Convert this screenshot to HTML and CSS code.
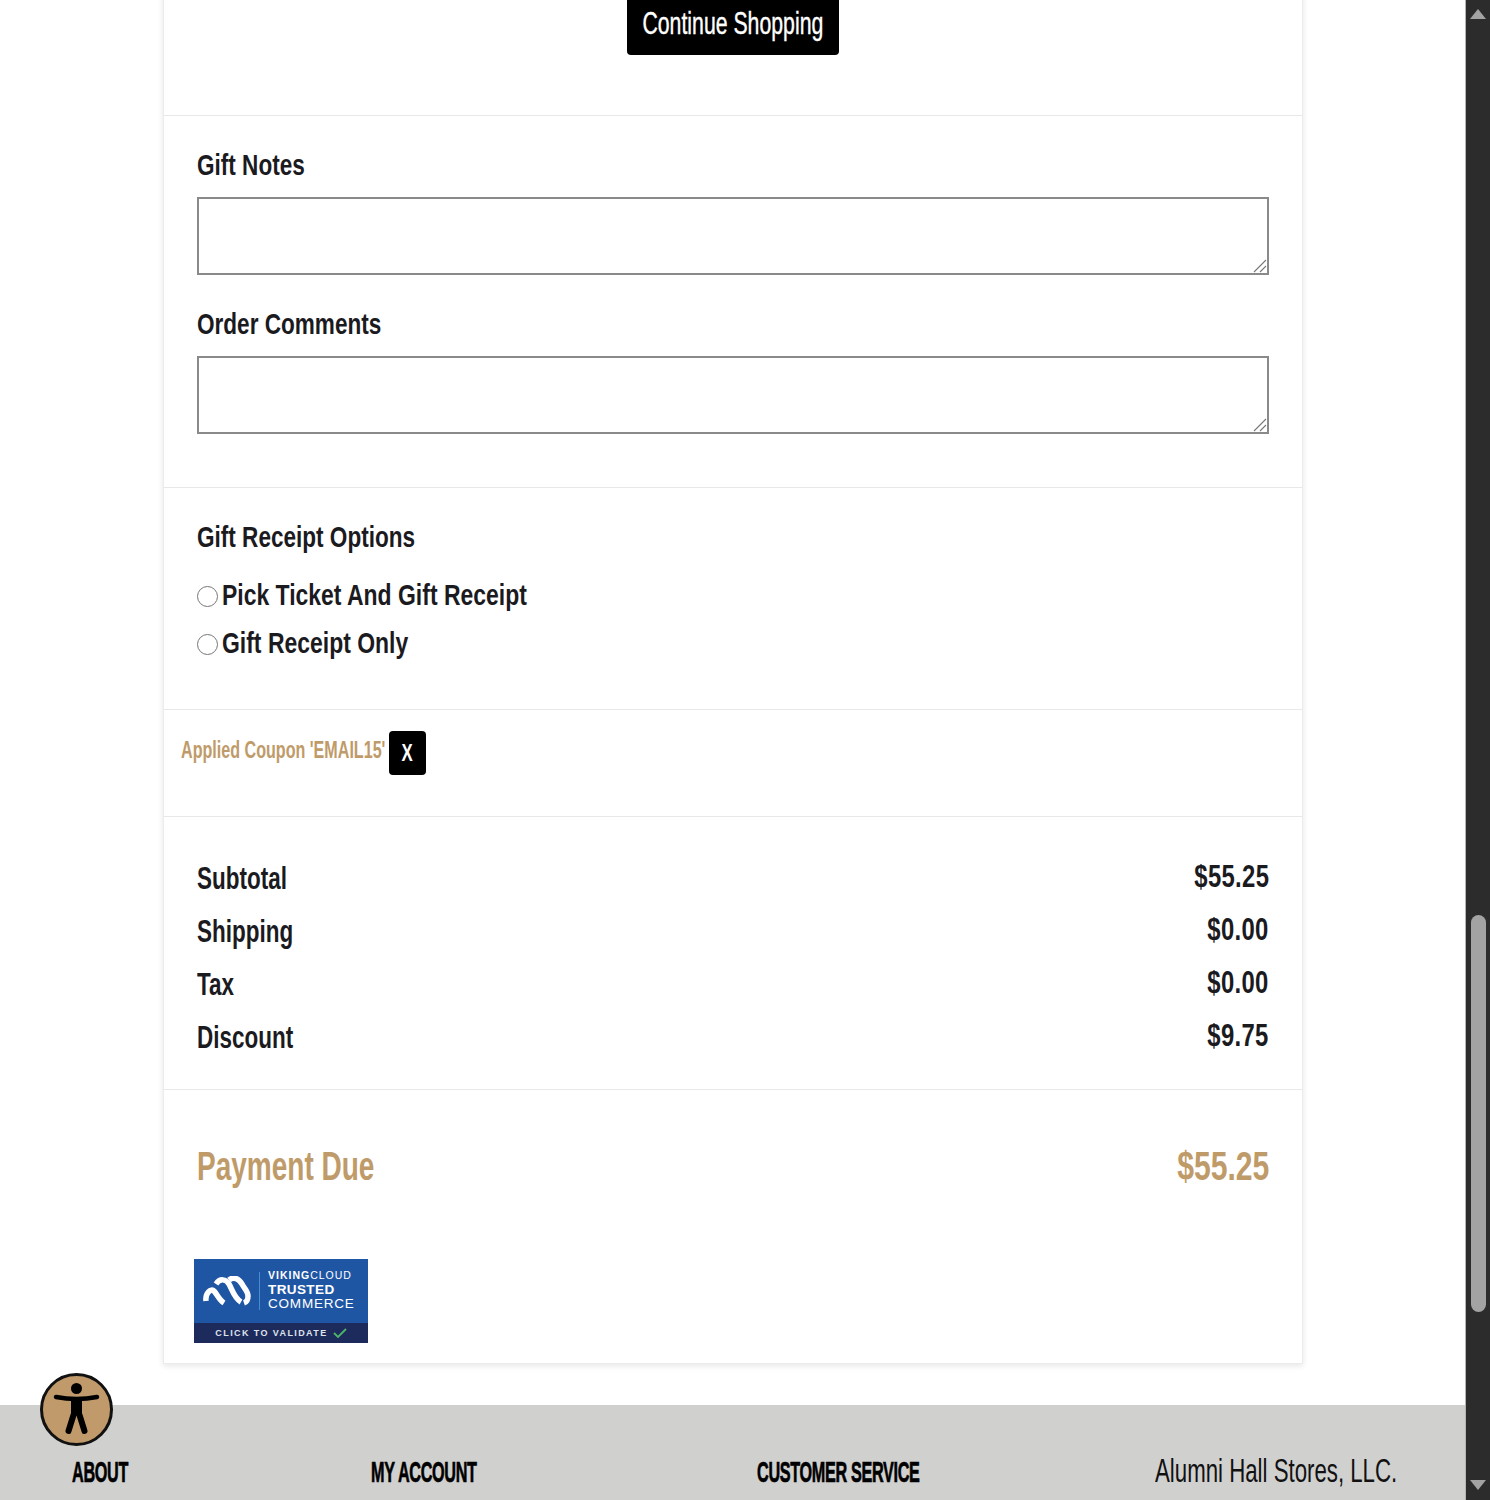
FILE: index.html
```html
<!DOCTYPE html>
<html lang="en">
<head>
  <meta charset="UTF-8">
  <title>Cart - Alumni Hall</title>
  <link rel="stylesheet" href="styles.css">
</head>
<body>
  <div class="page">
    <div class="card">
      <div class="section actions">
        <a class="btn-continue" href="#"><span>Continue Shopping</span></a>
      </div>

      <div class="section notes">
        <label class="field-label">Gift Notes</label>
        <div class="field-wrap">
          <textarea class="field"></textarea>
          <svg class="grip" width="14" height="14" viewBox="0 0 14 14"><path d="M1 13 L13 1 M7 13 L13 7" stroke="#777" stroke-width="1.1" fill="none"/></svg>
        </div>
        <label class="field-label second">Order Comments</label>
        <div class="field-wrap">
          <textarea class="field"></textarea>
          <svg class="grip" width="14" height="14" viewBox="0 0 14 14"><path d="M1 13 L13 1 M7 13 L13 7" stroke="#777" stroke-width="1.1" fill="none"/></svg>
        </div>
      </div>

      <div class="section receipt">
        <div class="field-label">Gift Receipt Options</div>
        <label class="radio-row"><input type="radio" name="receipt"><span>Pick Ticket And Gift Receipt</span></label>
        <label class="radio-row"><input type="radio" name="receipt"><span>Gift Receipt Only</span></label>
      </div>

      <div class="section coupon">
        <span class="coupon-text">Applied Coupon 'EMAIL15'</span>
        <a class="btn-remove" href="#"><span>X</span></a>
      </div>

      <div class="section totals">
        <div class="total-row"><span class="name">Subtotal</span><span class="amount">$55.25</span></div>
        <div class="total-row"><span class="name">Shipping</span><span class="amount">$0.00</span></div>
        <div class="total-row"><span class="name">Tax</span><span class="amount">$0.00</span></div>
        <div class="total-row"><span class="name">Discount</span><span class="amount">$9.75</span></div>
      </div>

      <div class="section due">
        <div class="due-row"><span class="due-name">Payment Due</span><span class="due-amount">$55.25</span></div>
        <div class="badge">
          <div class="badge-top">
            <svg class="badge-logo" width="48" height="30" viewBox="0 0 48 30">
              <path d="M3 25 C2 17 8 12 11 15 C14 18 16 24 21 27" fill="none" stroke="#fff" stroke-width="5.5"/>
              <path d="M13 8 C17 2 23 3 26 8 C29 13 31 22 38 26" fill="none" stroke="#fff" stroke-width="5.5"/>
              <path d="M26 4 C31 0 36 3 39 8 C41 12 45 15 45 20 C45 24 44 26 41 27" fill="none" stroke="#fff" stroke-width="5.5"/>
            </svg>
            <div class="badge-rule"></div>
            <div class="badge-words">
              <div class="badge-brand"><b>VIKING</b>CLOUD</div>
              <div class="badge-trusted">TRUSTED</div>
              <div class="badge-commerce">COMMERCE</div>
            </div>
          </div>
          <div class="badge-bottom">
            <span>CLICK TO VALIDATE</span>
            <svg width="14" height="10" viewBox="0 0 14 10"><path d="M1 5 L5 9 L13 1" fill="none" stroke="#4fb36a" stroke-width="1.8"/></svg>
          </div>
        </div>
      </div>
    </div>

    <div class="footer">
      <div class="footer-head">ABOUT</div>
      <div class="footer-head">MY ACCOUNT</div>
      <div class="footer-head">CUSTOMER SERVICE</div>
      <div class="footer-company">Alumni Hall Stores, LLC.</div>
    </div>

    <a class="a11y" href="#" aria-label="Accessibility">
      <svg width="73" height="73" viewBox="0 0 73 73">
        <circle cx="36.5" cy="36.5" r="35" fill="#c09a6b" stroke="#111" stroke-width="3"/>
        <circle cx="36.5" cy="15.5" r="5.5" fill="#000"/>
        <path d="M16 24 Q36.5 28 57 24" fill="none" stroke="#000" stroke-width="4.5" stroke-linecap="round"/>
        <path d="M36.5 26 V42" stroke="#000" stroke-width="11"/>
        <path d="M33.5 42 L28.5 58 M39.5 42 L44.5 58" fill="none" stroke="#000" stroke-width="6" stroke-linecap="round"/>
      </svg>
    </a>
  </div>

  <div class="scrollbar">
    <div class="arrow up"></div>
    <div class="thumb"></div>
    <div class="arrow down"></div>
  </div>
</body>
</html>
```

FILE: styles.css
```css
html, body {
  height: 100%;
  margin: 0;
  overflow: hidden;
}

body {
  display: flex;
  background: #fff;
  color: #1b1b1f;
  font-family: "Liberation Sans", sans-serif;
  font-weight: 700;
}

.page {
  position: relative;
  flex: 1;
  height: 1500px;
  overflow: hidden;
}

.card {
  width: 1138px;
  margin: -40px 0 41px 163px;
  background: #fff;
  border: 1px solid #ececec;
  border-top: none;
  box-shadow: 0 2px 6px rgba(0,0,0,0.10);
}

.section {
  padding: 0 33px;
  border-bottom: 1px solid #e8e8e8;
}

.section:last-child {
  border-bottom: none;
}

/* continue shopping */
.actions {
  display: flex;
  justify-content: center;
  padding-top: 33px;
  padding-bottom: 60px;
}

.btn-continue {
  display: flex;
  justify-content: center;
  align-items: center;
  width: 212px;
  height: 62px;
  background: #000;
  color: #fff;
  border-radius: 4px;
  text-decoration: none;
  font-size: 31px;
  font-weight: 400;
  -webkit-text-stroke: 0.4px #fff;
}

.btn-continue span {
  flex: none;
  white-space: nowrap;
  transform: scaleX(0.686);
}

/* notes */
.notes {
  padding-top: 34px;
  padding-bottom: 53px;
}

.field-label {
  display: block;
  height: 30px;
  line-height: 30px;
  font-size: 30px;
  white-space: nowrap;
  transform: scaleX(0.752);
  transform-origin: left;
}

.field-label.second {
  margin-top: 34px;
}

.field-wrap {
  position: relative;
  margin-top: 17px;
}

.field {
  display: block;
  width: 100%;
  height: 78px;
  margin: 0;
  padding: 2px;
  box-sizing: border-box;
  border: 2px solid #8a8a8a;
  background: #fff;
  resize: none;
}

.grip {
  position: absolute;
  right: 2px;
  bottom: 2px;
}

/* gift receipt */
.receipt {
  padding-top: 34px;
  padding-bottom: 41px;
}

.receipt .field-label {
  margin-bottom: 20px;
}

.radio-row {
  display: flex;
  align-items: center;
  height: 48px;
  font-size: 30px;
  white-space: nowrap;
}

.radio-row input {
  flex: none;
  width: 21px;
  height: 21px;
  margin: 0 4px 0 0;
}

.radio-row span {
  margin-bottom: 2px;
  transform: scaleX(0.765);
  transform-origin: left;
}

/* coupon */
.coupon {
  display: flex;
  align-items: center;
  padding: 21px 17px 41px;
}

.coupon-text {
  flex: none;
  width: 204px;
  margin: 0 4px 6px 0;
  color: #bf9b6a;
  font-size: 23px;
  white-space: nowrap;
  transform: scaleX(0.7);
  transform-origin: left;
}

.btn-remove {
  display: flex;
  justify-content: center;
  align-items: center;
  width: 37px;
  height: 44px;
  background: #000;
  color: #fff;
  border-radius: 4px;
  text-decoration: none;
  font-size: 24px;
}

.btn-remove span {
  transform: scaleX(0.7);
}

/* totals */
.totals {
  padding-top: 35px;
  padding-bottom: 25px;
}

.total-row {
  display: flex;
  justify-content: space-between;
  height: 53px;
  line-height: 53px;
  font-size: 31px;
  white-space: nowrap;
}

.name {
  transform: scaleX(0.725);
  transform-origin: left;
}

.amount {
  line-height: 49px;
  letter-spacing: 0.4px;
  transform: scaleX(0.77);
  transform-origin: right;
}

.due {
  padding-top: 57px;
  padding-bottom: 20px;
}

.due-row {
  display: flex;
  justify-content: space-between;
  line-height: 38px;
  color: #bf9b6a;
  font-size: 40px;
  white-space: nowrap;
}

.due-name {
  transform: scaleX(0.7);
  transform-origin: left;
}

.due-amount {
  transform: scaleX(0.753);
  transform-origin: right;
}

/* trust badge */
.badge {
  width: 174px;
  height: 84px;
  margin: 74px 0 0 -3px;
  background: #1f56a4;
  color: #fff;
}

.badge-top {
  display: flex;
  align-items: center;
  height: 64px;
  padding-left: 9px;
}

.badge-logo {
  flex: none;
}

.badge-rule {
  width: 1px;
  height: 38px;
  margin: 0 8px;
  background: #3f8fd0;
}

.badge-words {
  margin-bottom: 3px;
}

.badge-brand {
  font-size: 10.5px;
  line-height: 15px;
  font-weight: 400;
  letter-spacing: 1px;
}

.badge-trusted,
.badge-commerce {
  font-size: 13.5px;
  line-height: 14px;
  letter-spacing: 0.4px;
}

.badge-commerce {
  font-weight: 400;
  letter-spacing: 0.8px;
}

.badge-bottom {
  display: flex;
  align-items: center;
  justify-content: center;
  gap: 5px;
  height: 20px;
  background: #1c2b5c;
  color: #dfe3ec;
  font-size: 9px;
  letter-spacing: 1.4px;
}

/* footer */
.footer {
  display: grid;
  grid-template-columns: 299px 386px 398px 1fr;
  align-items: center;
  height: 95px;
  padding: 39px 0 0 72px;
  box-sizing: border-box;
  background: #d0d0cf;
  color: #000;
  white-space: nowrap;
}

.footer-head {
  font-size: 30px;
  letter-spacing: -0.6px;
  -webkit-text-stroke: 0.7px #000;
  transform: scaleX(0.54);
  transform-origin: left;
}

.footer-company {
  margin-bottom: 4px;
  font-size: 34px;
  font-weight: 400;
  color: #111;
  transform: scaleX(0.654);
  transform-origin: left;
}

.a11y {
  position: absolute;
  top: 1373px;
  left: 40px;
  width: 73px;
  height: 73px;
}

/* scrollbar drawn in the shot */
.scrollbar {
  flex: none;
  display: flex;
  flex-direction: column;
  align-items: center;
  width: 24px;
  height: 1500px;
  background: #2c2c2c;
  border-left: 1px solid #b5b5b5;
}

.arrow {
  width: 0;
  height: 0;
  border-left: 8px solid transparent;
  border-right: 8px solid transparent;
}

.arrow.up {
  margin-top: 9px;
  border-bottom: 10px solid #a3a3a3;
}

.arrow.down {
  margin-top: auto;
  margin-bottom: 10px;
  border-top: 10px solid #a3a3a3;
}

.thumb {
  width: 15px;
  height: 397px;
  margin-top: 896px;
  background: #a3a3a3;
  border-radius: 8px;
}
```
